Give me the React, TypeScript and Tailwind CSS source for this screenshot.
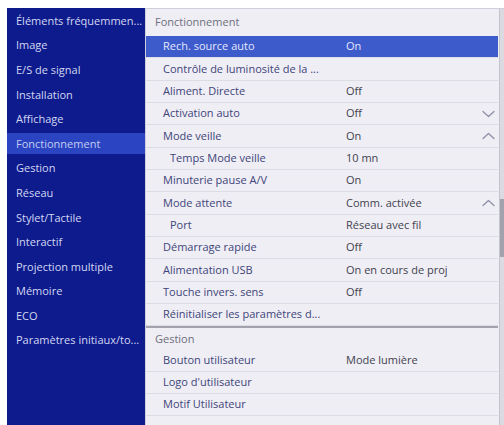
const menu = [
  'Éléments fréquemmen...',
  'Image',
  'E/S de signal',
  'Installation',
  'Affichage',
  'Fonctionnement',
  'Gestion',
  'Réseau',
  'Stylet/Tactile',
  'Interactif',
  'Projection multiple',
  'Mémoire',
  'ECO',
  'Paramètres initiaux/to...',
]

type Row =
  | { kind: 'header'; label: string }
  | { kind: 'item'; label: string; value?: string; sub?: boolean; active?: boolean; chevron?: 'up' | 'down' }

const rows: Row[] = [
  { kind: 'header', label: 'Fonctionnement' },
  { kind: 'item', label: 'Rech. source auto', value: 'On', active: true },
  { kind: 'item', label: 'Contrôle de luminosité de la ...' },
  { kind: 'item', label: 'Aliment. Directe', value: 'Off' },
  { kind: 'item', label: 'Activation auto', value: 'Off', chevron: 'down' },
  { kind: 'item', label: 'Mode veille', value: 'On', chevron: 'up' },
  { kind: 'item', label: 'Temps Mode veille', value: '10 mn', sub: true },
  { kind: 'item', label: 'Minuterie pause A/V', value: 'On' },
  { kind: 'item', label: 'Mode attente', value: 'Comm. activée', chevron: 'up' },
  { kind: 'item', label: 'Port', value: 'Réseau avec fil', sub: true },
  { kind: 'item', label: 'Démarrage rapide', value: 'Off' },
  { kind: 'item', label: 'Alimentation USB', value: 'On en cours de proj' },
  { kind: 'item', label: 'Touche invers. sens', value: 'Off' },
  { kind: 'item', label: 'Réinitialiser les paramètres d...' },
  { kind: 'header', label: 'Gestion' },
  { kind: 'item', label: 'Bouton utilisateur', value: 'Mode lumière' },
  { kind: 'item', label: "Logo d'utilisateur" },
  { kind: 'item', label: 'Motif Utilisateur' },
  { kind: 'item', label: '' },
]

function Chevron({ dir }: { dir: 'up' | 'down' }) {
  return (
    <svg width="13" height="8" viewBox="0 0 13 8" className="mr-[3px]" fill="none">
      <polyline
        points={dir === 'down' ? '1,1.5 6.5,6.5 12,1.5' : '1,6.5 6.5,1.5 12,6.5'}
        stroke="#8e90aa"
        strokeWidth="1.3"
        strokeLinejoin="round"
        strokeLinecap="round"
      />
    </svg>
  )
}

export default function App() {
  const selected = 'Fonctionnement'

  return (
    <div
      className="w-[504px] h-[425px] overflow-hidden bg-white flex pt-[8px] pl-[7px] text-[11px] antialiased"
      style={{ fontFamily: '"Open Sans", "Noto Sans", sans-serif' }}
    >
      {/* left category menu */}
      <nav className="w-[138px] shrink-0 bg-[#0e1b8c] flex flex-col gap-[3.6px] pt-[2.5px]">
        {menu.map((m) => (
          <div
            key={m}
            className={`h-[21px] flex items-center pl-[9px] whitespace-nowrap ${
              m === selected ? 'bg-[#2b45c2] text-[#c3ccf3]' : 'text-[#d2d7f3]'
            }`}
          >
            {m}
          </div>
        ))}
      </nav>

      {/* settings list */}
      <section className="relative flex-1 bg-[#efeef4] border-l border-t border-[#cfd0dc] pr-[6px]">
        {rows.map((r, i) =>
          r.kind === 'header' ? (
            <div
              key={i}
              className={`flex items-center pl-[9px] text-[#6e6e7c] ${
                i === 0 ? 'h-[27px]' : 'h-[23px] border-t-2 border-[#a2a2ac]'
              }`}
            >
              {r.label}
            </div>
          ) : (
            <div
              key={i}
              className={`h-[22.33px] flex items-center border-b border-[#dcdce5] ${
                r.active ? 'bg-[#3e5bcb] text-[#e4e9ff]' : 'text-[#40457a]'
              } ${r.sub ? 'pl-[24px]' : 'pl-[17px]'}`}
            >
              <span className={`whitespace-nowrap ${r.sub ? 'w-[176px]' : 'w-[183px]'}`}>{r.label}</span>
              <span className={`flex-1 whitespace-nowrap ${r.active ? '' : 'text-[#42424f]'}`}>{r.value}</span>
              {r.chevron && <Chevron dir={r.chevron} />}
            </div>
          )
        )}

        {/* scrollbar */}
        <div className="absolute top-0 right-0 bottom-0 w-[5px] bg-[#dadae0] border-l border-[#c4c4cc]">
          <div className="absolute top-[190px] left-0 right-0 h-[58px] bg-[#a2a2ac]" />
        </div>
      </section>
    </div>
  )
}
